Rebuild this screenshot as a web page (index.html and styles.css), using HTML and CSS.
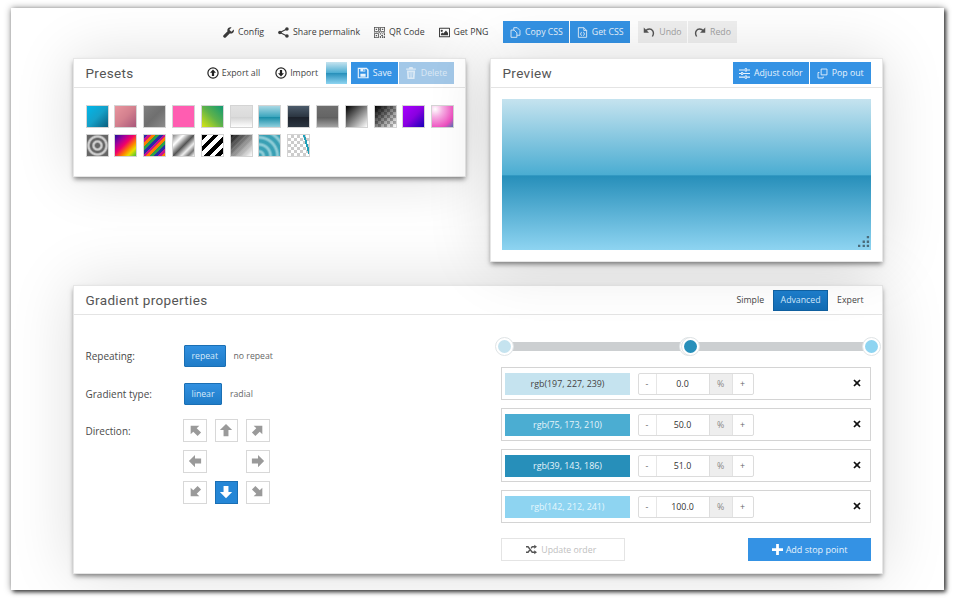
FILE: index.html
```html
<!DOCTYPE html>
<html lang="en">
<head>
<meta charset="utf-8">
<title>Gradient editor</title>
<link rel="stylesheet" href="styles.css">
</head>
<body>
<svg class="defs" width="0" height="0" aria-hidden="true">
  <symbol id="i-arrow" viewBox="0 0 16 16"><path d="M8 1 15 8H10.800V15H5.200V8H1Z"/></symbol>
  <symbol id="i-circle-up" viewBox="0 0 16 16"><circle cx="8" cy="8" r="6.800" fill="none" stroke="currentColor" stroke-width="1.600"/><path d="M8 3.400 12 7.600H9.500V12H6.500V7.600H4Z"/></symbol>
  <symbol id="i-x" viewBox="0 0 16 16"><path d="M3 .8 8 5.600 13 .8 15.200 3 10.400 8 15.200 13 13 15.200 8 10.400 3 15.200.8 13 5.600 8 .8 3Z"/></symbol>
</svg>
<div class="window">
  <nav class="toolbar">
    <a class="tool"><svg class="ic" viewBox="0 0 16 16"><path d="M15.600 3.800 12.200 7 9.200 4 12.400.6C9.500-.3 6.400 1.600 6.300 4.400c0 .7.100 1.300.3 1.900L.8 12c-.8.800-.8 1.900 0 2.700l.5.500c.8.800 1.900.7 2.700-.1l5.700-5.800c3 1 6.100-1 6.200-4 0-.5-.1-1-.3-1.500Z"/></svg>Config</a>
    <a class="tool"><svg class="ic" viewBox="0 0 16 16"><circle cx="13" cy="2.800" r="2.600"/><circle cx="13" cy="13.200" r="2.600"/><circle cx="2.800" cy="8" r="2.600"/><path class="share-line" d="M2.800 8 13 2.800M2.800 8 13 13.200"/></svg>Share permalink</a>
    <a class="tool"><svg class="ic ic-qr" viewBox="0 0 16 16"><path d="M0 0h7v7H0ZM1.200 1.200v4.600h4.600V1.200ZM9 0h7v7H9ZM10.200 1.200v4.600h4.600V1.200ZM0 9h7v7H0ZM1.200 10.200v4.600h4.600v-4.600ZM2.500 2.500h2v2h-2ZM11.500 2.500h2v2h-2ZM2.500 11.500h2v2h-2ZM7.500 0h1v2h-1ZM7.500 3h1v1.500h-1ZM7.500 5.500h1v2h-1ZM0 7.500h2v1H0ZM3 7.500h2v1H3ZM6 7.500h3v1H6ZM10 7.500h2v1h-2ZM13 7.500h3v1h-3ZM8.500 9h2v2h-2ZM12 9h1.500v1.500H12ZM14.500 9H16v3h-1.500ZM10.500 11.500H13V13h-2.500ZM8.500 13H10v3H8.500ZM11.500 13.500H13V16h-1.500ZM14 13.500h2V16h-2Z"/></svg>QR Code</a>
    <a class="tool"><svg class="ic ic-pic" viewBox="0 0 16 14"><path d="M1 0h14a1 1 0 0 1 1 1v12a1 1 0 0 1-1 1H1a1 1 0 0 1-1-1V1a1 1 0 0 1 1-1Zm.4 1.400v11.200h13.200V1.400ZM4 3a1.600 1.600 0 1 1 0 3.200A1.600 1.600 0 0 1 4 3Zm-1.200 8V8.800l2-1.800 1.500 1.400 3.800-4.200 3 3.400V11Z" fill-rule="evenodd"/></svg>Get PNG</a>
    <div class="btn-group group-css">
      <a class="btn btn-copy"><svg class="ic ic-line" viewBox="0 0 16 16"><path d="M5.500 4.500V1h5l4 4v7h-4.500"/><path d="M6 4.500H1.500V15h8.500V8.500Z"/></svg>Copy CSS</a>
      <a class="btn btn-get"><svg class="ic ic-line" viewBox="0 0 16 16"><path d="M2 1h8l4 4v10H2Z"/><path d="M10 1v4h4M7 7.500 5.500 8.500v3L7 12.500M9 7.500l1.500 1v3L9 12.500"/></svg>Get CSS</a>
    </div>
    <div class="btn-group">
      <a class="btn btn-muted btn-undo"><svg class="ic ic-line ic-hist" viewBox="0 0 16 16"><path d="M3.500 6.500C6 3.300 11 3.300 13 6.500c1.200 2 1 5-.5 7.500"/><path class="hist-tip" d="M1 2V9H8Z"/></svg>Undo</a>
      <a class="btn btn-muted btn-redo"><svg class="ic ic-line ic-hist" viewBox="0 0 16 16"><path d="M12.500 6.500C10 3.300 5 3.300 3 6.500c-1.200 2-1 5 .5 7.500"/><path class="hist-tip" d="M15 2V9H8Z"/></svg>Redo</a>
    </div>
  </nav>

  <div class="columns">
    <section class="panel presets">
      <header class="panel-head">
        <h2>Presets</h2>
        <div class="head-actions">
          <a class="link link-export"><svg class="ic-dark"><use href="#i-circle-up"/></svg>Export all</a>
          <a class="link link-import"><svg class="ic-dark flip"><use href="#i-circle-up"/></svg>Import</a>
          <span class="current-swatch"></span>
          <div class="btn-group">
            <a class="btn btn-save"><svg class="ic ic-lg" viewBox="0 0 16 16"><path fill-rule="evenodd" d="M1 1h12l2.500 2.500V15H1ZM2.500 2.500v11h11V4.200L12.300 2.500H11V6H4.500V2.500ZM8.500 3v2.200H10V3ZM4.500 9h7v4h-7Z"/></svg>Save</a>
            <a class="btn btn-delete"><svg class="ic ic-lg" viewBox="0 0 16 16"><path fill-rule="evenodd" d="M6 0h4l1 2h3.500v1.500H1.500V2H5ZM2.500 4.500h11L12.700 16H3.300ZM5 6.500 5.400 14h1L6 6.500ZM7.500 6.500V14h1V6.500ZM10 6.500 9.600 14h1l.4-7.500Z"/></svg>Delete</a>
          </div>
        </div>
      </header>
      <div class="swatches">
        <i class="sw s1"></i><i class="sw s2"></i><i class="sw s3"></i><i class="sw s4"></i><i class="sw s5"></i><i class="sw s6"></i><i class="sw s7"></i><i class="sw s8"></i><i class="sw s9"></i><i class="sw s10"></i><i class="sw s11"></i><i class="sw s12"></i><i class="sw s13"></i>
        <i class="sw s14"></i><i class="sw s15"></i><i class="sw s16"></i><i class="sw s17"></i><i class="sw s18"></i><i class="sw s19"></i><i class="sw s20"></i><i class="sw s21"></i>
      </div>
    </section>

    <section class="panel preview">
      <header class="panel-head">
        <h2>Preview</h2>
        <div class="btn-group">
          <a class="btn btn-adjust"><svg class="ic" viewBox="0 0 16 16"><path fill-rule="evenodd" d="M0 2h8.500V.5h3V2H16v1.500h-4.500V5h-3V3.500H0ZM9.500 1.500v2.500h1V1.500ZM0 7.200h3V5.800h3v1.400h10v1.500H6v1.500H3V8.700H0ZM4 6.800v2.400h1V6.800ZM0 12.500h8.500V11h3v1.500H16V14h-4.500v1.500h-3V14H0ZM9.500 12v2.500h1V12Z"/></svg>Adjust color</a>
          <a class="btn btn-pop"><svg class="ic ic-line" viewBox="0 0 16 16"><path d="M6 1.500h8.500V10H6Z"/><path d="M3.500 6.500H1.500v8H9V12.500"/></svg>Pop out</a>
        </div>
      </header>
      <div class="preview-area">
        <svg class="grip" viewBox="0 0 13 13"><path d="M9.500 0h2.500v2.500H9.500ZM5 5h2.500v2.500H5ZM9.500 5h2.500v2.500H9.500ZM0 9.500h2.500V12H0ZM5 9.500h2.500V12H5ZM9.500 9.500h2.500V12H9.500Z"/></svg>
      </div>
    </section>
  </div>

  <section class="panel props">
    <header class="panel-head">
      <h2>Gradient properties</h2>
      <div class="mode-tabs">
        <a class="mode">Simple</a>
        <a class="mode mode-on">Advanced</a>
        <a class="mode">Expert</a>
      </div>
    </header>
    <div class="props-body">
      <div class="settings">
        <div class="field">
          <span class="label">Repeating:</span>
          <a class="opt opt-on">repeat</a><a class="opt">no repeat</a>
        </div>
        <div class="field">
          <span class="label">Gradient type:</span>
          <a class="opt opt-on">linear</a><a class="opt">radial</a>
        </div>
        <div class="field field-dir">
          <span class="label">Direction:</span>
          <div class="dirs">
            <a class="dir"><svg class="d-nw"><use href="#i-arrow"/></svg></a>
            <a class="dir"><svg><use href="#i-arrow"/></svg></a>
            <a class="dir"><svg class="d-ne"><use href="#i-arrow"/></svg></a>
            <a class="dir"><svg class="d-w"><use href="#i-arrow"/></svg></a>
            <span></span>
            <a class="dir"><svg class="d-e"><use href="#i-arrow"/></svg></a>
            <a class="dir"><svg class="d-sw"><use href="#i-arrow"/></svg></a>
            <a class="dir dir-on"><svg class="d-s"><use href="#i-arrow"/></svg></a>
            <a class="dir"><svg class="d-se"><use href="#i-arrow"/></svg></a>
          </div>
        </div>
      </div>
      <div class="stops">
        <div class="slider">
          <span class="knob k0"></span><span class="knob k50"></span><span class="knob k51"></span><span class="knob k100"></span>
        </div>
        <div class="stop">
          <span class="color c1">rgb(197, 227, 239)</span>
          <div class="num"><a>-</a><b>0.0</b><em>%</em><a>+</a></div>
          <svg class="remove"><use href="#i-x"/></svg>
        </div>
        <div class="stop">
          <span class="color c2">rgb(75, 173, 210)</span>
          <div class="num"><a>-</a><b>50.0</b><em>%</em><a>+</a></div>
          <svg class="remove"><use href="#i-x"/></svg>
        </div>
        <div class="stop">
          <span class="color c3">rgb(39, 143, 186)</span>
          <div class="num"><a>-</a><b>51.0</b><em>%</em><a>+</a></div>
          <svg class="remove"><use href="#i-x"/></svg>
        </div>
        <div class="stop">
          <span class="color c4">rgb(142, 212, 241)</span>
          <div class="num"><a>-</a><b>100.0</b><em>%</em><a>+</a></div>
          <svg class="remove"><use href="#i-x"/></svg>
        </div>
        <div class="stop-actions">
          <a class="btn-order"><svg class="ic" viewBox="0 0 16 16"><path d="M0 3h3.500l6 8H12V9l4 3-4 3v-2H8.500l-6-8H0ZM0 11h2.500L5 7.700l1.200 1.600L3.500 13H0ZM8.500 3H12V1l4 3-4 3V5H9.500L8 7 6.800 5.400Z"/></svg>Update order</a>
          <a class="btn btn-add"><svg class="ic ic-plus" viewBox="0 0 16 16"><path d="M6 0h4v6h6v4h-6v6H6v-6H0V6h6Z"/></svg>Add stop point</a>
        </div>
      </div>
    </div>
  </section>
</div>
</body>
</html>
```

FILE: styles.css
```css
* { box-sizing: border-box; }
html, body { margin: 0; height: 100%; }
body {
  background: #fff;
  padding: 8px 10px 10px 11px;
  font-family: "Open Sans", "Liberation Sans", sans-serif;
  font-size: 8.750px;
  color: #444;
  overflow: hidden;
}
a { color: inherit; text-decoration: none; }
.defs { position: absolute; }

.window {
  height: 582px;
  background: #fff;
  padding: 0 61px 0 62px;
  box-shadow: 0 0 7px rgba(0,0,0,.4), 2px 2px 4px rgba(0,0,0,.7);
  overflow: hidden;
}

.toolbar {
  height: 50px;
  display: flex;
  align-items: center;
  padding: 0 0 2px 150px;
  gap: 14px;
  white-space: nowrap;
}
.tool { display: flex; align-items: center; gap: 4px; color: #3c3c3c; }
.ic { width: 11px; height: 11px; fill: currentColor; flex: none; }
.ic-line { fill: none; stroke: currentColor; stroke-width: 1.300; }
.ic-qr { fill: #555; }
.share-line { fill: none; stroke: currentColor; stroke-width: 1.600; }
.btn-group { display: flex; gap: 1px; flex: none; }
.group-css { margin-left: 1px; }
.toolbar .btn-group + .btn-group { margin-left: -6px; }

.btn {
  height: 22px;
  display: flex;
  align-items: center;
  justify-content: center;
  gap: 4px;
  background: #3492e4;
  color: #e8f3fc;
  white-space: nowrap;
}
.btn-copy { width: 66px; }
.btn-get { width: 59.500px; }
.btn-undo { width: 49px; }
.btn-redo { width: 49px; }
.btn-muted { background: #efefef; color: #a0a0a0; }
.ic-hist { color: #555; width: 12px; height: 12px; stroke-width: 1.900; }
.hist-tip { fill: currentColor; stroke: none; }
.btn-save { width: 46.500px; }
.btn-delete { width: 55px; background: #a3c8e8; color: #dbe9f5; }
.btn-adjust { width: 76.500px; }
.btn-pop { width: 60.500px; }
.ic-lg { width: 12px; height: 12px; }

.columns { display: flex; justify-content: space-between; align-items: flex-start; margin-bottom: 23px; }

.panel {
  background: #fff;
  border: 1px solid #e6e6e6;
  box-shadow: 0 0 60px rgba(0,0,0,.14), 0 3px 5px -1px rgba(0,0,0,.5);
}
.presets, .preview { width: 393px; }
.presets { height: 119px; }
.preview { height: 204px; }
.props { height: 289px; }

.panel-head {
  height: 29px;
  padding: 0 11.500px;
  display: flex;
  align-items: center;
  justify-content: space-between;
  border-bottom: 1px solid #e4e4e4;
}
.panel-head h2 {
  margin: 0;
  font-family: Roboto, "Liberation Sans", sans-serif;
  font-size: 13.500px;
  font-weight: 400;
  letter-spacing: .35px;
  color: #555;
}
.head-actions { display: flex; align-items: center; }
.link { display: flex; align-items: center; gap: 3px; color: #444; }
.link-export { margin-right: 15px; }
.link-import { margin-right: 8px; }
.ic-dark { width: 12px; height: 12px; fill: #222; color: #222; }
.flip { transform: rotate(180deg); }
.current-swatch {
  width: 21px;
  height: 22px;
  margin-right: 4px;
  background: linear-gradient(#c5e3ef 0, #4badd2 50%, #278fba 51%, #8ed4f1 100%);
}

.swatches {
  display: grid;
  grid-template-columns: repeat(13, 23px);
  column-gap: 5.800px;
  row-gap: 6px;
  padding: 17px 0 0 11.600px;
}
.sw { display: block; height: 23px; border: 1px solid #d4d4d4; }
.s1 { background: linear-gradient(135deg, #00b7ea, #15a0c8 50%, #0b5e7d); }
.s2 { background: linear-gradient(135deg, #e8959e, #d3808e 50%, #a9587a); }
.s3 { background: linear-gradient(135deg, #808080, #6f6f6f 50%, #8c8c8c); }
.s4 { background: #ff5db1; }
.s5 { background: linear-gradient(45deg, #d8e612, #5fb24a 50%, #119a72); }
.s6 { background: linear-gradient(#e2e2e2, #dbdbdb 50%, #d1d1d1 51%, #fefefe); }
.s7 { background: linear-gradient(#a8d8e4, #3fa7bf 50%, #138aa5 51%, #8fd0de); }
.s8 { background: linear-gradient(#4c5b6b, #2c3642 50%, #1b2029 51%, #2c3642); }
.s9 { background: linear-gradient(#6e6e6e, #656565 50%, #5a5a5a 51%, #a3a3a3); }
.s10 { background: linear-gradient(135deg, #000, #fff); }
.s11 {
  background:
    linear-gradient(135deg, #000, rgba(0,0,0,0)),
    conic-gradient(#bbb 25%, #fff 0 50%, #bbb 0 75%, #fff 0) 0 0 / 6px 6px;
}
.s12 { background: linear-gradient(135deg, #a800ff, #8a00e0 50%, #1a00b8); }
.s13 { background: radial-gradient(circle at 15% 15%, #fff 0, #f7b0e4 30%, #ee4fc0 75%, #2f7fb0 105%); }
.s14 { background: radial-gradient(circle, #666 0 2px, #ccc 3.500px 4.500px, #666 6px 7px, #ccc 8.500px 9.500px, #666 11px); }
.s15 { background: linear-gradient(135deg, #1f0fa0, #a0009a 25%, #f0006a 45%, #ff8000 65%, #e8e000 80%, #40c040); }
.s16 { background: repeating-linear-gradient(135deg, #2a2aa8 0 2.700px, #c8148c 2.700px 5.400px, #ff7a00 5.400px 8.100px, #2aa04a 8.100px 10.800px); }
.s17 { background: linear-gradient(135deg, #888, #fff 25%, #555 50%, #eee 70%, #777 85%, #fff); }
.s18 { background: repeating-linear-gradient(135deg, #000 0 4px, #fff 4px 8px); }
.s19 { background: repeating-linear-gradient(135deg, rgba(255,255,255,0) 0 2px, rgba(255,255,255,.08) 2px 4px), linear-gradient(135deg, #111, #fff); }
.s20 { background: repeating-radial-gradient(circle at 0 100%, #3aa0b4 0, #3aa0b4 2px, #8ccbd6 4px, #8ccbd6 5px, #3aa0b4 7px); }
.s21 {
  background:
    linear-gradient(74deg, transparent 78%, #1f9fb8 78% 85%, transparent 85%),
    conic-gradient(#ccc 25%, #fff 0 50%, #ccc 0 75%, #fff 0) 0 0 / 6px 6px;
}

.preview-area {
  position: relative;
  height: 151px;
  margin: 11px 11px 0;
  background: linear-gradient(#c5e3ef 0, #4badd2 50%, #278fba 51%, #8ed4f1 100%);
}
.grip { position: absolute; right: 1px; bottom: 2px; width: 12px; height: 12px; fill: #4a6b7a; }

.mode-tabs { display: flex; align-items: center; margin-right: -2px; }
.mode { padding: 0 9px; color: #444; }
.mode-on {
  height: 21px;
  width: 55px;
  padding: 0;
  display: flex;
  align-items: center;
  justify-content: center;
  color: #cfe6fa;
  background: linear-gradient(#1c7cc9, #126bb3);
  border: 1px solid #0f5f9f;
}

.props-body { display: flex; }
.settings { width: 416px; padding: 30px 0 0 11.500px; }
.field { display: flex; align-items: center; height: 22px; margin-bottom: 16px; }
.label { width: 98.500px; font-size: 10px; color: #4a4a4a; }
.opt {
  margin-right: 8px;
  color: #666;
  font-size: 8.700px;
  white-space: nowrap;
}
.opt-on {
  height: 21.500px;
  padding: 0 6.500px;
  display: flex;
  align-items: center;
  color: #d5e9fa;
  background: linear-gradient(#3190e0, #1f7cc8);
  border: 1px solid #1a6fb4;
  border-radius: 1px;
}
.field-dir { align-items: flex-start; height: auto; margin: 0; }
.field-dir .label { padding-top: 3px; }
.dirs {
  display: grid;
  grid-template-columns: repeat(3, 23.500px);
  grid-auto-rows: 23px;
  column-gap: 8px;
  row-gap: 8px;
  margin-left: -1px;
  margin-top: -2.500px;
}
.dir {
  display: flex;
  align-items: center;
  justify-content: center;
  background: #fff;
  border: 1px solid #d8d8d8;
}
.dir svg { width: 14px; height: 14px; fill: #9a9a9a; }
.dir-on { background: #2486d6; border-color: #1a6fb4; }
.dir-on svg { fill: #fff; }
.d-nw { transform: rotate(-45deg); }
.d-ne { transform: rotate(45deg); }
.d-w { transform: rotate(-90deg); }
.d-e { transform: rotate(90deg); }
.d-sw { transform: rotate(-135deg); }
.d-s { transform: rotate(180deg); }
.d-se { transform: rotate(135deg); }

.stops { flex: 1; padding: 0 11px; }
.slider {
  position: relative;
  height: 9px;
  margin: 27px 0 16px 3px;
  background: #cccfd1;
}
.knob {
  position: absolute;
  top: 50%;
  width: 19px;
  height: 19px;
  margin: -9.500px 0 0 -9.500px;
  border-radius: 50%;
  background: #fff;
  border: 1px solid #dfe4e6;
}
.knob::after {
  content: "";
  position: absolute;
  inset: 2px;
  border-radius: 50%;
  background: currentColor;
}
.k0 { left: 0; color: #c5e3ef; }
.k50 { left: 184px; color: #4badd2; }
.k51 { left: 186.500px; color: #278fba; }
.k100 { left: 367px; color: #8ed4f1; }

.stop {
  height: 33px;
  margin-bottom: 8px;
  padding: 0 9px 0 3px;
  display: flex;
  align-items: center;
  border: 1px solid #d4d4d4;
}
.color {
  width: 125px;
  height: 22px;
  margin-right: 7.500px;
  display: flex;
  align-items: center;
  justify-content: center;
  font-size: 8.900px;
}
.c1 { background: #c5e3ef; color: #444; }
.c2 { background: #4badd2; color: #e6f4fa; }
.c3 { background: #278fba; color: #e6f4fa; }
.c4 { background: #8ed4f1; color: #e6f7fd; }
.num {
  width: 116px;
  height: 22px;
  display: flex;
  border: 1px solid #dcdcdc;
  border-radius: 2px;
  text-align: center;
  line-height: 20px;
}
.num a { width: 17px; color: #666; }
.num b { width: 53px; border-left: 1px solid #e6e6e6; font-weight: 400; font-size: 8.900px; color: #333; }
.num em { width: 24px; background: #eee; border-left: 1px solid #ddd; border-right: 1px solid #e2e2e2; font-style: normal; color: #888; }
.num a:last-child { flex: 1; }
.remove { width: 8px; height: 8px; margin-left: auto; margin-top: -1px; fill: #111; }

.stop-actions { display: flex; justify-content: space-between; margin-top: 15px; }
.btn-order {
  width: 123.500px;
  height: 23px;
  padding-right: 3px;
  display: flex;
  align-items: center;
  justify-content: center;
  gap: 4px;
  border: 1px solid #e4e4e4;
  color: #c0c0c0;
}
.btn-order .ic { fill: #555; }
.btn-add { width: 123px; height: 23px; font-size: 9px; gap: 3px; }
.ic-plus { width: 11px; height: 11px; fill: #fff; }
```
